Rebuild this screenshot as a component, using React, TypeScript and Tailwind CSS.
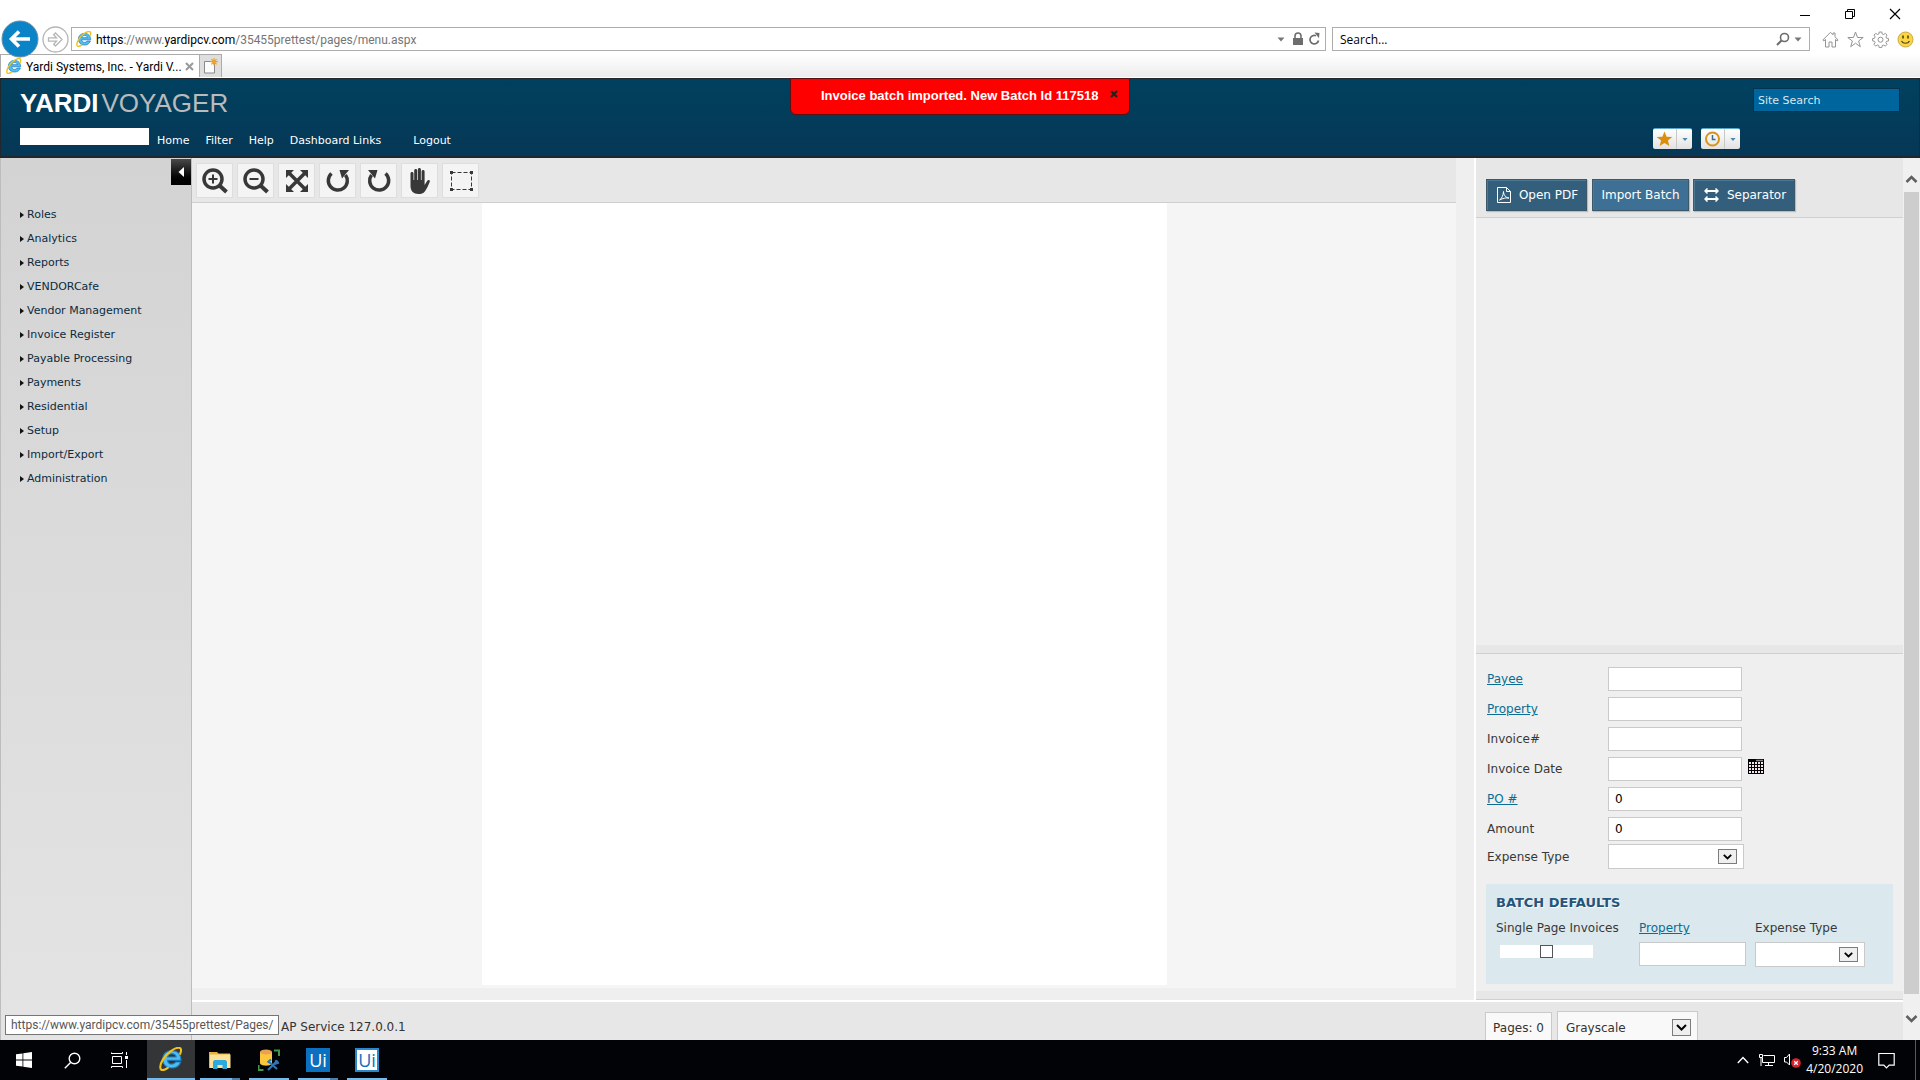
import type { ReactNode } from "react";

const UI = "font-['Open_Sans',sans-serif]";
const URL_TEXT = "font-['Roboto',sans-serif]";
const VERDANA = "font-['DejaVu_Sans',sans-serif]";

function IeLogo({ size }: { size: number }) {
  return (
    <svg width={size} height={size} viewBox="1 1 29 30" aria-hidden="true" className="shrink-0">
      <path
        d="M28 17.500H11.200c.2 3 2.500 4.900 5.400 4.900 2.100 0 3.700-.8 4.700-2.600h6.200c-1.500 4.700-5.700 7.500-10.900 7.500-6.800 0-11.600-4.500-11.600-11C5 10 9.900 5.500 16.600 5.500 23.600 5.500 28 10.200 28 17.500Zm-6-4c-.3-2.400-2.500-4-5.300-4-2.900 0-5 1.600-5.400 4H22Z"
        fill="#4fbdf0"
        stroke="#1b7fc4"
        strokeWidth="1.400"
      />
      <path
        d="M27 9.500c1.800-4.300 1.300-7.300-1.600-7.500C20 1.600 10.500 8.500 5.500 16.500 1.500 23 .8 29.500 4.600 29.900c2.200.2 4.600-1.200 6.900-2.900"
        fill="none"
        stroke="#f3c11b"
        strokeWidth="2.600"
        strokeLinecap="round"
      />
    </svg>
  );
}

function DownTriangle({ className }: { className: string }) {
  return (
    <svg width="8" height="5" viewBox="0 0 8 5" aria-hidden="true" className={className}>
      <path d="M0.500 0.500h7L4 4.500z" fill="currentColor" />
    </svg>
  );
}

function BrowserChrome() {
  return (
    <div className={`bg-white text-black ${UI}`}>
      <div className="flex h-[27px] items-center justify-end gap-[33px] pr-[19px]">
        <button aria-label="Minimize">
          <svg width="12" height="12" viewBox="0 0 12 12">
            <path d="M1 7.500h10" stroke="#000" />
          </svg>
        </button>
        <button aria-label="Restore">
          <svg width="12" height="12" viewBox="0 0 12 12" fill="none" stroke="#000">
            <path d="M1.500 3.500h7v7h-7zM3.500 3.500v-2h7v7h-2" />
          </svg>
        </button>
        <button aria-label="Close">
          <svg width="12" height="12" viewBox="0 0 12 12">
            <path d="M1 1l10 10M11 1L1 11" stroke="#000" strokeWidth="1.200" />
          </svg>
        </button>
      </div>
      <div className="flex h-[27px] items-start pr-[6px]">
        <div className="flex h-6 w-[71px] shrink-0 items-center gap-[3px] pl-px">
          <button aria-label="Back" className="relative z-10 shrink-0">
            <svg width="38" height="38" viewBox="0 0 38 38">
              <circle cx="19" cy="19" r="18" fill="#0a84c6" stroke="#6a8fa5" />
              <path d="M29 19H11M18 11.500L10.500 19l7.500 7.500" fill="none" stroke="#fff" strokeWidth="3.600" />
            </svg>
          </button>
          <button aria-label="Forward" className="shrink-0">
            <svg width="27" height="27" viewBox="0 0 27 27" fill="none" stroke="#b5b5b5" strokeWidth="1.300">
              <circle cx="13.500" cy="13.500" r="12.500" />
              <path d="M6.500 11.800h8l-2.800-3 1.800-1.800 6.500 6.500-6.500 6.500-1.800-1.800 2.800-3h-8z" />
            </svg>
          </button>
        </div>
        <div className="mr-[6px] flex h-6 min-w-0 flex-1 items-center border border-[#adadad] pl-1 pr-1">
          <IeLogo size={16} />
          <a href="#address" className={`ml-1 flex-1 truncate pt-0.5 text-xs text-[#757575] ${URL_TEXT}`}>
            <span className="text-black">https</span>://www.<span className="text-black">yardipcv.com</span>
            /35455prettest/pages/menu.aspx
          </a>
          <DownTriangle className="mr-[7px] text-[#777]" />
          <svg width="12" height="14" viewBox="0 0 12 14" aria-hidden="true" className="mr-1">
            <path d="M3 6V4a3 3 0 0 1 6 0v2" fill="none" stroke="#6d6d6d" strokeWidth="1.600" />
            <path d="M1 6h10v7H1z" fill="#6d6d6d" />
          </svg>
          <button aria-label="Refresh">
            <svg width="13" height="14" viewBox="0 0 13 14">
              <path d="M10.500 8.500A4.300 4.300 0 1 1 8 3.700" fill="none" stroke="#6d6d6d" strokeWidth="1.700" />
              <path d="M6.500 0.500l5 .5-.5 5.200z" fill="#6d6d6d" />
            </svg>
          </button>
        </div>
        <div className="flex h-6 w-[478px] shrink items-center border border-[#adadad] px-[7px]">
          <input aria-label="Search" placeholder="Search..." className="min-w-0 flex-1 pt-0.5 text-xs outline-none placeholder:text-black" />
          <button aria-label="Run search" className="flex items-center gap-1">
            <svg width="14" height="14" viewBox="0 0 14 14" fill="none" stroke="#6d6d6d">
              <circle cx="8.500" cy="5.500" r="4" strokeWidth="1.600" />
              <path d="M5.500 8.500L1 13" strokeWidth="2" />
            </svg>
            <DownTriangle className="text-[#777]" />
          </button>
        </div>
        <div className="ml-3 flex h-6 shrink-0 items-center gap-2">
          <button aria-label="Home page">
            <svg width="17" height="17" viewBox="0 0 17 17" fill="none" stroke="#949494">
              <path d="M.8 9L8.500 1.300 11 3.800V2h2v3.800L16.200 9l-1 1-1.700-1.600V16H10v-5H7v5H3.500V8.400L1.800 10z" />
            </svg>
          </button>
          <button aria-label="Favorites">
            <svg width="17" height="17" viewBox="0 0 17 17" fill="none" stroke="#949494">
              <path d="M8.500 1l2 5.500h5.700l-4.600 3.500 1.700 5.700-4.800-3.500-4.800 3.500L5.400 10 .8 6.500h5.700z" />
            </svg>
          </button>
          <button aria-label="Tools">
            <svg width="17" height="17" viewBox="0 0 17 17" fill="none" stroke="#949494">
              <path d="M7.200 1h2.600l.4 2 1.300.5 1.800-1.100 1.700 1.700-1 1.800.5 1.300 2 .4v2.300l-2 .4-.6 1.300 1.100 1.800-1.700 1.700-1.800-1-1.300.5-.4 2H7.200l-.4-2-1.300-.6-1.800 1.100L2 13.400l1.100-1.800-.6-1.300-1.900-.4V7.600l2-.4.500-1.300L2 4.100l1.700-1.700 1.800 1.100L6.800 3z" />
              <circle cx="8.500" cy="8.700" r="2.500" />
            </svg>
          </button>
          <button aria-label="Send a smile">
            <svg width="17" height="17" viewBox="0 0 17 17">
              <circle cx="8.500" cy="8.500" r="7.500" fill="#fbd63f" stroke="#c9a94a" />
              <path d="M6 4.500v3M11 4.500v3" stroke="#4b4424" strokeWidth="1.600" />
              <path d="M4.500 10c1.500 3 6.500 3 8 0" fill="none" stroke="#4b4424" strokeWidth="1.200" />
            </svg>
          </button>
        </div>
      </div>
      <div className="flex h-6 border-b border-white bg-linear-to-b from-white to-[#ececec]">
        <div className="flex w-[200px] items-center border border-b-0 border-[#ababab] bg-white pl-[5px] pr-[5px]">
          <IeLogo size={16} />
          <span className={`ml-1 flex-1 whitespace-nowrap pt-0.5 text-xs ${URL_TEXT}`}>Yardi Systems, Inc. - Yardi V...</span>
          <button aria-label="Close tab">
            <svg width="9" height="9" viewBox="0 0 9 9">
              <path d="M1 1l7 7M8 1L1 8" stroke="#999" strokeWidth="2" />
            </svg>
          </button>
        </div>
        <button aria-label="New tab" className="flex w-[22px] items-center justify-center border border-b-0 border-l-0 border-[#ababab] bg-[#dedede]">
          <svg width="15" height="16" viewBox="0 0 15 16">
            <path d="M1.500 3.500h10v11.500h-10z" fill="#fcfcfc" stroke="#8a8a8a" />
            <path d="M11 0v7.500M7.300 3.700h7.500M8.400 1.100l5.200 5.200M13.600 1.100L8.400 6.300" stroke="#f0a020" strokeWidth="1.200" />
          </svg>
        </button>
      </div>
    </div>
  );
}

function QuickButton({ label, children }: { label: string; children: ReactNode }) {
  return (
    <button
      aria-label={label}
      className="flex h-[21px] w-[39px] items-center rounded-[2px] border-t border-[#5aa5c8] bg-linear-to-b from-white to-[#e2e2e2] pl-[3px]"
    >
      {children}
      <span className="ml-[3px] flex h-full flex-1 items-center justify-center border-l border-[#c8c8c8]">
        <DownTriangle className="w-[6px] text-[#4788ae]" />
      </span>
    </button>
  );
}

function AppHeader() {
  return (
    <header className={`relative flex h-20 justify-between border border-b-2 border-[#20282e] bg-linear-to-b from-[#00415f] to-[#063756] pl-[19px] pr-[19px] text-white ${VERDANA}`}>
      <div>
        <div className="mt-[7px] flex h-[34px] items-center gap-[3px] font-['Liberation_Sans',sans-serif] text-[26px] leading-none">
          <span className="font-bold">YARDI</span>
          <span className="text-[#b9bbbd]">VOYAGER</span>
        </div>
        <nav className="mt-2 flex text-[11px] leading-[26px]">
          <div className="mr-2 h-[17px] w-[129px] bg-white" />
          <a href="#home" className="mr-4">Home</a>
          <a href="#filter" className="mr-4">Filter</a>
          <a href="#help" className="mr-4">Help</a>
          <a href="#links" className="mr-8">Dashboard Links</a>
          <a href="#logout">Logout</a>
        </nav>
      </div>
      <div className="absolute left-1/2 -top-px flex h-[37px] w-[340px] -translate-x-1/2 items-center rounded-b-md border border-[#5c1010] bg-[#ff0000] pb-0.5 pl-[30px] font-['Liberation_Sans',sans-serif] text-[13px] font-bold">
        <span className="whitespace-nowrap">Invoice batch imported. New Batch Id 117518</span>
        <button aria-label="Dismiss" className="mb-1 ml-3">
          <svg width="8" height="8" viewBox="0 0 8 8">
            <path d="M1 1l6 6M7 1L1 7" stroke="#222" strokeWidth="2.200" />
          </svg>
        </button>
      </div>
      <div className="mt-[9px] flex flex-col">
        <input
          aria-label="Site Search"
          placeholder="Site Search"
          className="h-6 w-[147px] self-end border border-[#03334e] bg-[#00659d] px-1 text-[11px] placeholder:text-[#dbe7ee]"
        />
        <div className="mr-[160px] mt-4 flex gap-[9px]">
          <QuickButton label="Favorites">
            <svg width="17" height="16" viewBox="0 0 17 16">
              <path d="M8.500 0.500l2.100 5.200 5.700.3-4.400 3.500 1.500 5.600-4.900-3.100-4.900 3.100 1.500-5.600L.7 6l5.700-.3z" fill="#dd8f0c" />
            </svg>
          </QuickButton>
          <QuickButton label="Recent">
            <svg width="17" height="16" viewBox="0 0 17 16" fill="none">
              <circle cx="8.500" cy="8" r="6.500" stroke="#d9921a" strokeWidth="2" />
              <path d="M8.500 4v4.500h3" stroke="#3a6f90" strokeWidth="1.500" />
            </svg>
          </QuickButton>
        </div>
      </div>
    </header>
  );
}

const MENU = [
  "Roles", "Analytics", "Reports", "VENDORCafe", "Vendor Management", "Invoice Register",
  "Payable Processing", "Payments", "Residential", "Setup", "Import/Export", "Administration",
];

function Sidebar() {
  return (
    <aside className="flex w-48 shrink-0 flex-col border-l border-r border-[#bdbdbd] bg-linear-to-b from-[#d3d3d3] to-[#e4e4e4]">
      <button aria-label="Collapse menu" className="mt-px flex h-[26px] w-5 items-center justify-center self-end bg-linear-to-b from-[#4a4a4a] to-black">
        <svg width="6" height="10" viewBox="0 0 6 10">
          <path d="M6 0v10L0.500 5z" fill="#fff" />
        </svg>
      </button>
      <ul className="mt-[18px] pl-[19px] text-[11px] leading-6 text-[#0c2b3d]">
        {MENU.map((item) => (
          <li key={item}>
            <a href="#menu" className="flex items-center gap-[3px]">
              <svg width="4" height="6" viewBox="0 0 4 6" aria-hidden="true">
                <path d="M0 0l4 3-4 3z" fill="#111" />
              </svg>
              {item}
            </a>
          </li>
        ))}
      </ul>
    </aside>
  );
}

const TOOLS: { label: string; icon: ReactNode }[] = [
  {
    label: "Zoom in",
    icon: (
      <>
        <circle cx="11" cy="11" r="9" fill="none" strokeWidth="3.500" />
        <path d="M17.500 17.500l7 6.500" strokeWidth="4" />
        <path d="M11 6.500v9M6.500 11h9" strokeWidth="2" />
      </>
    ),
  },
  {
    label: "Zoom out",
    icon: (
      <>
        <circle cx="11" cy="11" r="9" fill="none" strokeWidth="3.500" />
        <path d="M17.500 17.500l7 6.500" strokeWidth="4" />
        <path d="M6.500 11h9" strokeWidth="2" />
      </>
    ),
  },
  {
    label: "Fit",
    icon: (
      <>
        <path d="M5 5l16 16M21 5L5 21" strokeWidth="3.500" />
        <path d="M2 2h8L2 10zM24 2h-8l8 8zM2 24h8l-8-8zM24 24h-8l8-8z" stroke="none" />
      </>
    ),
  },
  {
    label: "Rotate left",
    icon: (
      <>
        <path d="M6.500 5.500a9.500 9.500 0 1 0 14 1.500" fill="none" strokeWidth="3.500" />
        <path d="M14.500 2h9.500l-7 8.500z" stroke="none" />
      </>
    ),
  },
  {
    label: "Rotate right",
    icon: (
      <>
        <path d="M19.500 5.500a9.500 9.500 0 1 1-14 1.500" fill="none" strokeWidth="3.500" />
        <path d="M11.500 2H2l7 8.500z" stroke="none" />
      </>
    ),
  },
  {
    label: "Pan",
    icon: (
      <path
        d="M3.500 14V5.500c0-2 3-2 3 0V12h.7V2.500c0-2 3-2 3 0V12h.7V1.500c0-2 3-2 3 0V12h.7V3.500c0-2 3-2 3 0V17l2.500-4c1-1.700 3.400-1 2.600 1-1.200 3-2.700 6.500-4.700 9.200C16.300 25.500 14 26 11.500 26c-5 0-8-3-8-8z"
        stroke="none"
      />
    ),
  },
  {
    label: "Select area",
    icon: (
      <>
        <path d="M3.500 4.500h20v17h-20z" fill="none" strokeWidth="1" strokeDasharray="4 2" />
        <path d="M2 3h3v3H2zM22 3h3v3h-3zM2 20h3v3H2zM22 20h3v3h-3z" stroke="none" />
      </>
    ),
  },
];

function Viewer() {
  return (
    <section className="mr-[18px] mb-3 flex min-w-0 flex-1 flex-col bg-[#f5f5f5]">
      <div className="flex h-[45px] shrink-0 items-start gap-1 border-b border-[#cfcfcf] bg-[#e7e7e7] pl-1 pt-[5px]">
        {TOOLS.map((tool) => (
          <button
            key={tool.label}
            aria-label={tool.label}
            className="flex h-[35px] w-[37px] items-center justify-center border border-[#dedede] bg-[#f4f4f4]"
          >
            <svg width="26" height="26" viewBox="0 0 26 26" fill="#383838" stroke="#383838">
              {tool.icon}
            </svg>
          </button>
        ))}
      </div>
      <div className="mb-[3px] w-[685px] max-w-full flex-1 self-center bg-white" />
    </section>
  );
}

function Arrow() {
  return (
    <span className="pointer-events-none absolute right-[7px] top-[5px] flex h-[15px] w-[19px] items-center justify-center border border-[#7c7c7c] bg-[#efefef]">
      <svg width="9" height="6" viewBox="0 0 9 6">
        <path d="M0.800 0.800l3.700 3.700L8.200.8" fill="none" stroke="#000" strokeWidth="1.800" />
      </svg>
    </span>
  );
}

const FIELD = "border border-[#cacaca] bg-white px-[6px] text-xs text-black";
const LINK = "text-[#0b6d93] underline";

function Field({ id, label, link, value, children }: { id: string; label: string; link?: boolean; value?: string; children?: ReactNode }) {
  return (
    <div className="flex h-[25px] items-center">
      <label htmlFor={id} className="w-[121px] shrink-0 pt-px">
        {link ? <a href="#lookup" className={LINK}>{label}</a> : label}
      </label>
      <input id={id} defaultValue={value} className={`h-6 w-[134px] ${FIELD}`} />
      {children}
    </div>
  );
}

function ImportPanel() {
  const button = "flex h-8 items-center justify-center border border-[#3d5868] text-white shadow-[inset_1px_1px_0_#4c7894,1px_1px_1px_#bbb]";
  return (
    <section className="flex w-[429px] shrink-0 flex-col border-l-2 border-white text-xs text-[#383838]">
      <div className="flex h-[60px] shrink-0 items-start border-b border-[#d0d0d0] bg-[#e7e7e7] pl-[10px] pt-[21px]">
        <button className={`${button} mr-[5px] w-[101px] gap-2 bg-[#335f7d] pl-0.5`}>
          <svg width="14" height="16" viewBox="0 0 14 16" fill="none" stroke="#fff">
            <path d="M.5.5h9l4 4v11H.5zM9.500.5v4h4" />
            <path d="M2.500 13c2-1 4-5 4-8.500 0 4 3 6.500 5.500 6.500-3-.5-6 .3-9.500 2z" />
          </svg>
          Open PDF
        </button>
        <button className={`${button} mr-1 w-[97px] bg-[#3d7094]`}>Import Batch</button>
        <button className={`${button} w-[102px] gap-2 bg-[#335f7d] pl-0.5`}>
          <svg width="15" height="14" viewBox="0 0 15 14" fill="none" stroke="#fff" strokeWidth="2">
            <path d="M1.500 3h12M1.500 11h12" />
            <path d="M3.500.5L1 3l2.500 2.500M11.500.5L14 3l-2.500 2.500M3.500 8.500L1 11l2.500 2.500M11.500 8.500L14 11l-2.500 2.500" strokeWidth="1.500" />
          </svg>
          Separator
        </button>
      </div>
      <div className="flex-1" />
      <div className="h-[9px] border-b border-[#d0d0d0] bg-[#e7e7e7]" />
      <form className="flex flex-col px-[10px] pt-3">
        <div className="flex flex-col gap-[5px] pl-px">
          <Field id="payee" label="Payee" link />
          <Field id="property" label="Property" link />
          <Field id="invoice" label="Invoice#" />
          <Field id="date" label="Invoice Date">
            <button type="button" aria-label="Pick date" className="mb-1 ml-[6px]">
              <svg width="16" height="15" viewBox="0 0 16 15">
                <path d="M0 0h16v15H0z" fill="#000" />
                <path d="M1 4h14M1 7h14M1 10h14M1 13h14" stroke="#f7e4ee" strokeWidth="2" strokeDasharray="2 1" />
                <path d="M8 1.500h7" stroke="#888" strokeWidth="1.500" />
              </svg>
            </button>
          </Field>
          <Field id="po" label="PO #" link value="0" />
          <Field id="amount" label="Amount" value="0" />
          <div className="-mt-[2px] flex items-center">
            <label htmlFor="expense" className="w-[121px] pt-px">Expense Type</label>
            <div className="relative">
              <select id="expense" className={`block h-[25px] w-[136px] appearance-none ${FIELD}`} />
              <Arrow />
            </div>
          </div>
        </div>
        <fieldset className="mb-[7px] mt-[15px] h-[100px] bg-[#dbe8ed] px-[10px] pt-[11px]">
          <h2 className="text-[13px] font-bold leading-4 text-[#27547a] [text-shadow:1px_1px_1px_#fff]">BATCH DEFAULTS</h2>
          <div className="mt-[9px] flex">
            <div className="w-[143px]">
              <label htmlFor="single" className="block h-[22px]">Single Page Invoices</label>
              <div className="ml-1 mt-[3px] flex h-[13px] w-[93px] justify-center bg-white">
                <input id="single" type="checkbox" className="size-[13px] appearance-none border border-[#555] bg-white" />
              </div>
            </div>
            <div className="w-[116px]">
              <label htmlFor="dproperty" className="block h-[22px]"><a href="#lookup" className={LINK}>Property</a></label>
              <input id="dproperty" className={`block h-6 w-[107px] ${FIELD}`} />
            </div>
            <div>
              <label htmlFor="dexpense" className="block h-[22px]">Expense Type</label>
              <div className="relative">
                <select id="dexpense" className={`block h-[25px] w-[110px] appearance-none ${FIELD}`} />
                <Arrow />
              </div>
            </div>
          </div>
        </fieldset>
      </form>
      <div className="h-[9px] border-b border-[#d0d0d0] bg-[#e7e7e7]" />
    </section>
  );
}

function StatusBar() {
  return (
    <footer className="flex h-10 shrink-0 items-end border-t-2 border-white bg-[#e7e7e7] text-xs text-[#333]">
      <span className="flex h-[26px] flex-1 items-center pl-[89px]">AP Service 127.0.0.1</span>
      <span className="mr-[5px] flex h-7 w-[67px] items-center justify-center border border-b-0 border-[#cacaca] bg-[#f9f9f9] pt-0.5">Pages: 0</span>
      <div className="relative mr-[205px]">
        <select aria-label="Color mode" className="block h-[29px] w-[141px] appearance-none border border-b-0 border-[#cacaca] bg-[#f9f9f9] pl-2 pt-[3px]">
          <option>Grayscale</option>
        </select>
        <span className="pointer-events-none absolute right-[7px] top-2 flex h-[17px] w-[19px] items-center justify-center border border-[#7c7c7c] bg-[#efefef]">
          <svg width="11" height="7" viewBox="0 0 11 7">
            <path d="M1 1l4.500 4.500L10 1" fill="none" stroke="#000" strokeWidth="2" />
          </svg>
        </span>
      </div>
    </footer>
  );
}

function Scrollbar() {
  return (
    <div className="flex w-[17px] shrink-0 flex-col items-center bg-[#f0f0f0] pt-4">
      <svg width="13" height="10" viewBox="0 0 13 10">
        <path d="M1.500 8l5-5 5 5" fill="none" stroke="#606060" strokeWidth="2.600" />
      </svg>
      <div className="mb-5 mt-2 w-[15px] flex-1 bg-[#cdcdcd]" />
      <svg width="13" height="10" viewBox="0 0 13 10" className="mb-4">
        <path d="M1.500 2l5 5 5-5" fill="none" stroke="#606060" strokeWidth="2.600" />
      </svg>
    </div>
  );
}

function TaskApp({ label, split, children }: { label: string; split?: boolean; children: ReactNode }) {
  return (
    <button aria-label={label} className="relative mr-[9px] flex h-full w-10 items-center justify-center">
      {children}
      <span className="absolute inset-x-0 bottom-0 flex h-[2px] bg-[#76b9ed]">
        {split && <span className="ml-auto w-2 bg-[#4f7fa6]" />}
      </span>
    </button>
  );
}

function Taskbar() {
  return (
    <div className={`flex h-10 shrink-0 items-center bg-[#010307] text-white ${UI}`}>
      <button aria-label="Start" className="flex h-full w-12 items-center justify-center">
        <svg width="16" height="16" viewBox="0 0 16 16" fill="#fff">
          <path d="M0 2.300L6.500 1.400v6.200H0zM7.300 1.300L16 0v7.600H7.300zM0 8.400h6.500v6.200L0 13.700zM7.300 8.400H16V16l-8.700-1.300z" />
        </svg>
      </button>
      <button aria-label="Search Windows" className="flex h-full w-12 items-center justify-center">
        <svg width="17" height="17" viewBox="0 0 17 17" fill="none" stroke="#fff" strokeWidth="1.400">
          <circle cx="10.500" cy="6.500" r="5.300" />
          <path d="M6.600 10.400L.8 16.200" />
        </svg>
      </button>
      <button aria-label="Task View" className="flex h-full w-[51px] items-center justify-center pr-[5px]">
        <svg width="17" height="16" viewBox="0 0 17 16" fill="none" stroke="#fff">
          <path d="M1.500 4.500h9v7h-9zM.5 2V.5M.5 1.500h11V0M.5 16v-1.500h11V16M15.500 0v3M15.500 8v8" />
          <path d="M14 4h3v3h-3z" fill="#fff" stroke="none" />
        </svg>
      </button>
      <button aria-label="Internet Explorer" className="mr-[5px] flex h-full w-12 items-center justify-center border-b-2 border-[#76b9ed] bg-[#343537]">
        <IeLogo size={24} />
      </button>
      <TaskApp label="File Explorer" split>
        <svg width="22" height="18" viewBox="0 0 22 18">
          <path d="M0 1h8l1.500 1.500H21V17H0z" fill="#e8b33c" />
          <path d="M1 3.500h20.500V17H1z" fill="#fde399" />
          <path d="M4 18v-7.500L5.500 9h11l1.500 1.500V18h-4.500v-4h-5v4z" fill="#2ea9e0" />
        </svg>
      </TaskApp>
      <TaskApp label="Database tools">
        <svg width="22" height="22" viewBox="0 0 22 22">
          <path d="M2 3v11c0 3.500 12 3.500 12 0V3z" fill="#fcc73a" />
          <ellipse cx="8" cy="3" rx="6" ry="2.500" fill="#e9a153" />
          <path d="M16 1.500h5V7M.5 16v5h5" fill="none" stroke="#3f9a45" strokeWidth="2" />
          <path d="M10 12l9 8M19.500 11.500L10 21M18 11v3.500l3-1M9.500 13.500L13 10.500" fill="none" stroke="#2f75b5" strokeWidth="2.200" />
        </svg>
      </TaskApp>
      <TaskApp label="UiPath Studio" split>
        <span className="flex size-6 items-center justify-center bg-[#0b70c0] text-lg leading-none">Ui</span>
      </TaskApp>
      <TaskApp label="UiPath Robot">
        <span className="flex size-6 items-center justify-center border-2 border-[#2b86cb] bg-white text-lg leading-none text-[#0b70c0]">Ui</span>
      </TaskApp>
      <div className="ml-auto flex h-full items-center">
        <button aria-label="Hidden icons" className="mr-[10px]">
          <svg width="12" height="8" viewBox="0 0 12 8" fill="none" stroke="#fff" strokeWidth="1.400">
            <path d="M.8 7L6 1.500 11.200 7" />
          </svg>
        </button>
        <svg width="17" height="14" viewBox="0 0 17 14" fill="none" stroke="#fff" className="mr-2">
          <path d="M4.500 2.500h11v7H3.500V5M.5 1.500h3v3h-3zM2 4.500V13M6 12.500h8M9.500 9.500v3" />
        </svg>
        <svg width="17" height="16" viewBox="0 0 17 16" fill="none" className="mr-[5px]">
          <path d="M.5 5.500h2l3-3.500v11l-3-3h-2z" stroke="#fff" />
          <circle cx="12" cy="11" r="4.800" fill="#d9232e" />
          <path d="M10.200 9.200l3.600 3.600M13.800 9.200l-3.600 3.600" stroke="#fff" strokeWidth="1.300" />
        </svg>
        <div className="mr-[15px] text-center text-xs leading-[18px]">
          <div>9:33 AM</div>
          <div>4/20/2020</div>
        </div>
        <button aria-label="Notifications" className="mr-5">
          <svg width="17" height="17" viewBox="0 0 17 17" fill="none" stroke="#fff" strokeWidth="1.200">
            <path d="M.8 1.500h15.400v11.700h-5L8.500 16l-2.700-2.800h-5z" />
          </svg>
        </button>
        <span className="h-full w-[5px] border-l border-[#55585c]" />
      </div>
    </div>
  );
}

export default function App() {
  return (
    <div className="relative flex min-h-screen flex-col bg-[#efefef]">
      <BrowserChrome />
      <AppHeader />
      <div className={`flex flex-1 ${VERDANA}`}>
        <Sidebar />
        <div className="flex min-w-0 flex-1 flex-col">
          <div className="flex flex-1">
            <Viewer />
            <ImportPanel />
          </div>
          <StatusBar />
        </div>
        <Scrollbar />
      </div>
      <Taskbar />
      <div className={`absolute bottom-[45px] left-[5px] flex h-5 items-center whitespace-nowrap border border-[#767676] bg-white px-[5px] text-xs text-[#575757] ${URL_TEXT}`}>
        https://www.yardipcv.com/35455prettest/Pages/
      </div>
    </div>
  );
}
